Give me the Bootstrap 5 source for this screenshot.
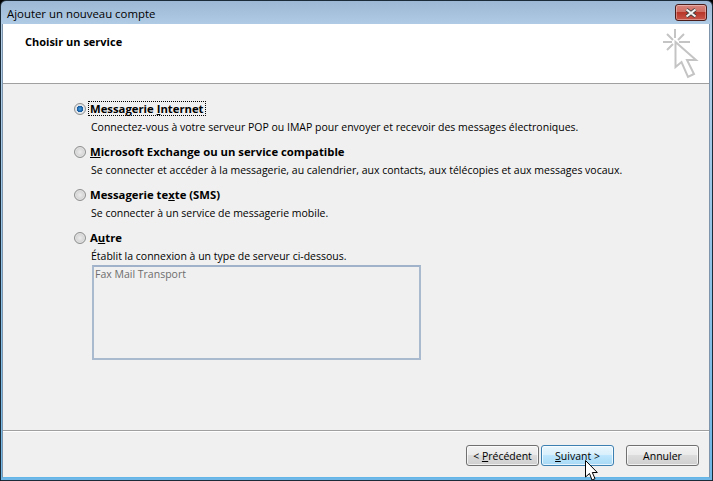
<!DOCTYPE html>
<html lang="fr"><head><meta charset="utf-8"><title>Ajouter un nouveau compte</title>
<link href="https://cdn.jsdelivr.net/npm/bootstrap@5.3.0/dist/css/bootstrap.min.css" rel="stylesheet">
<style>
html,body{margin:0;height:481px;overflow:hidden;background:#000}
body{font-family:"Open Sans","Liberation Sans",sans-serif;font-size:11px;line-height:13px;color:#000}
.win{width:713px;height:481px;background:linear-gradient(#9db8d4,#b4cfe8 6%,#6fb7e6);border:1px solid #1c2b38;border-radius:6px 6px 0 0;padding:0 2px 2px 1px;position:relative;overflow:hidden}
.tbar{height:24px;font-size:11.4px;padding:1px 0 0 5px}
.closex{width:32px;height:17px;margin:-1px 3px 0 0;border:1px solid #4a1d1a;border-radius:3px;background:linear-gradient(#d9837a 0,#cf6f65 45%,#b8362a 50%,#c9564a 100%);box-shadow:inset 0 0 0 1px rgba(255,255,255,.35)}
.inner{height:454px;background:#f0f0f0;border:1px solid #7f95ab;border-top:0;border-bottom-color:#62b7e8}
.head{height:60px;background:#fff;border-bottom:1px solid #a0a0a0;padding:11px 0 0 22px;font-weight:700;font-size:11px}
.headicon{width:40px;height:54px;margin:-7px 8px 0 0}
.mid{height:346px;padding:18px 0 0 71px}
.opt{height:43px}
.rad{width:12px;height:12px;border-radius:50%;border:1px solid #8e8f8f;background:radial-gradient(#ececec,#c4c4c4);margin:0 3px 0 0;flex:none;box-shadow:inset 0 0 0 1px #e4e4e4}
.radon{background:radial-gradient(circle,#4aa0e6 0,#12589a 42%,#dfe6ee 50%,#e8e8e8 100%)}
.ltitle{font-weight:700;font-size:11.3px;line-height:13px;padding:0 1px}
.focusd{outline:1px dotted #000}
.desc{margin:6px 0 0 17px;white-space:nowrap;font-size:10.5px}
.lbox{width:329px;height:95px;margin:2px 0 0 18px;border:2px solid #a9b9ce;border-top-color:#9fb2c9;background:#f0f0f0;color:#6d6d6d;padding:1px;font-size:10.5px}
.foot{height:47px;border-top:1px solid #a0a0a0;box-shadow:inset 0 1px 0 #fff;padding:14px 10px 0 0;gap:2px}
.wbtn{width:73px;height:21px;border:1px solid #707070;border-radius:3px;background:linear-gradient(#f2f2f2 0,#ebebeb 45%,#dcdcdc 50%,#cfcfcf 100%);font-size:10.5px;line-height:18px;padding:1px 0 0;color:#000;box-shadow:inset 0 0 0 1px rgba(255,255,255,.7)}
.wbtn:hover{color:#000}
.hotb{border-color:#3c7fb1;background:linear-gradient(#eaf6fd 0,#d9f0fc 45%,#bee6fd 50%,#a7d9f5 100%)}
.gapb{margin-left:10px}
.ptr{position:absolute;left:584px;top:459px;width:13px;height:21px}
</style></head><body>
<div class="win d-flex flex-column">
 <div class="tbar d-flex justify-content-between align-items-center"><span>Ajouter un nouveau compte</span>
  <div class="closex d-flex align-items-center justify-content-center"><svg width="14" height="10" viewBox="0 0 14 10"><path d="M2.5 1.5 11.5 8.5M11.5 1.5 2.5 8.5" stroke="#3d3d3d" stroke-width="3.6"/><path d="M2.5 1.5 11.5 8.5M11.5 1.5 2.5 8.5" stroke="#f4f4f4" stroke-width="2.2"/></svg></div></div>
 <div class="inner">
  <div class="head d-flex justify-content-between"><span>Choisir un service</span>
   <svg class="headicon" viewBox="0 0 40 54"><g stroke="#c4c4c4" stroke-width="2" fill="none"><path d="M14 1V10M2 14H11M18 14H29M6 6l6 6M23 6l-6 6M6 22l6-6"/><path d="M14.5 14V39l6-5L27 49l6-3-7-14h9z" fill="#fff"/></g></svg></div>
  <div class="mid">
   <div class="opt"><div class="d-flex align-items-center"><span class="rad radon"></span><span class="ltitle focusd">Messagerie <u>I</u>nternet</span></div><div class="desc">Connectez-vous à votre serveur POP ou IMAP pour envoyer et recevoir des messages électroniques.</div></div>
   <div class="opt"><div class="d-flex align-items-center"><span class="rad"></span><span class="ltitle"><u>M</u>icrosoft Exchange ou un service compatible</span></div><div class="desc">Se connecter et accéder à la messagerie, au calendrier, aux contacts, aux télécopies et aux messages vocaux.</div></div>
   <div class="opt"><div class="d-flex align-items-center"><span class="rad"></span><span class="ltitle">Messagerie te<u>x</u>te (SMS)</span></div><div class="desc">Se connecter à un service de messagerie mobile.</div></div>
   <div><div class="d-flex align-items-center"><span class="rad"></span><span class="ltitle">A<u>u</u>tre</span></div><div class="desc">Établit la connexion à un type de serveur ci-dessous.</div><div class="lbox">Fax Mail Transport</div></div>
  </div>
  <div class="foot d-flex justify-content-end">
   <button class="btn wbtn">&lt; <u>P</u>récédent</button><button class="btn wbtn hotb"><u>S</u>uivant &gt;</button><button class="btn wbtn gapb">Annuler</button>
  </div>
 </div>
 <svg class="ptr" viewBox="0 0 13 21"><path d="M.5.5V17l4-3.5L7 20l3-1.3-2.7-6.2h5z" fill="#fff" stroke="#000"/></svg>
</div>
<script src="https://cdn.jsdelivr.net/npm/bootstrap@5.3.0/dist/js/bootstrap.bundle.min.js"></script>
</body></html>
